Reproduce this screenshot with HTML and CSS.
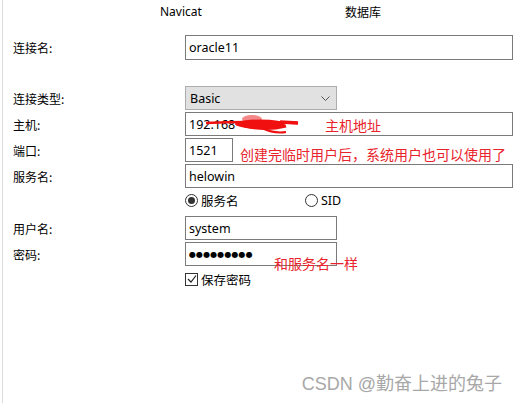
FILE: index.html
```html
<!DOCTYPE html>
<html lang="zh-CN">
<head>
  <meta charset="UTF-8" />
  <title>新建连接 - Oracle</title>
  <link rel="stylesheet" href="styles.css">
</head>
<body>
  <div class="window">
    <div class="tabs">
      <span class="tab tab-navicat">Navicat</span>
      <span class="tab tab-db">数据库</span>
    </div>

    <div class="form">
      <div class="row row-name">
        <span class="label">连接名:</span>
        <div class="field wide">oracle11</div>
      </div>

      <div class="row row-type">
        <span class="label">连接类型:</span>
        <div class="select">
          <span>Basic</span>
          <svg class="chevron" width="9" height="5" viewBox="0 0 9 5">
            <path d="M0.5 0.5 L4.5 4.5 L8.5 0.5" fill="none" stroke="#555" stroke-width="1"/>
          </svg>
        </div>
      </div>

      <div class="row">
        <span class="label">主机:</span>
        <div class="field wide host-field">
          192.168
          <!-- red marker scribble hiding the address -->
          <svg class="scribble" width="130" height="24" viewBox="0 0 130 24">
            <ellipse cx="66" cy="6" rx="10" ry="4" fill="#f06060" opacity="0.75"/>
            <path d="M20 10 Q60 8 112 10" fill="none" stroke="#f01010" stroke-width="2.4"/>
            <ellipse cx="74" cy="11" rx="25" ry="4.5" fill="#f01010"/>
            <path d="M58 13 Q80 18 100 13" fill="none" stroke="#f01010" stroke-width="3"/>
            <path d="M76 15 Q88 21 100 19" fill="none" stroke="#f01010" stroke-width="2"/>
            <path d="M94 9 L112 10" fill="none" stroke="#f01010" stroke-width="3.5"/>
          </svg>
          <span class="note note-host">主机地址</span>
        </div>
      </div>

      <div class="row">
        <span class="label">端口:</span>
        <div class="field port">1521</div>
        <span class="note note-port">创建完临时用户后，系统用户也可以使用了</span>
      </div>

      <div class="row">
        <span class="label">服务名:</span>
        <div class="field wide">helowin</div>
      </div>

      <div class="row row-radios">
        <span class="label"></span>
        <span class="option option-service"><span class="radio checked"></span>服务名</span>
        <span class="option"><span class="radio"></span>SID</span>
      </div>

      <div class="row row-user">
        <span class="label">用户名:</span>
        <div class="field short">system</div>
      </div>

      <div class="row">
        <span class="label">密码:</span>
        <div class="field short pass-field">
          <span class="dots">●●●●●●●●●</span>
          <span class="note note-pass">和服务名一样</span>
        </div>
      </div>

      <div class="row row-check">
        <span class="label"></span>
        <span class="option">
          <span class="checkbox">
            <svg width="10" height="10" viewBox="0 0 10 10">
              <path d="M1 5 L4 8 L9 1.5" fill="none" stroke="#222" stroke-width="1.2"/>
            </svg>
          </span>保存密码
        </span>
      </div>
    </div>

    <div class="watermark">CSDN @勤奋上进的兔子</div>
  </div>
</body>
</html>
```

FILE: styles.css
```css
html, body {
  margin: 0;
  padding: 0;
  background: #fff;
}

body {
  font-family: "Noto Sans", "Noto Sans CJK SC", sans-serif;
  font-size: 12px;
  color: #000;
}

.window {
  position: relative;
  height: 403px;
  margin-left: 2px;
  border-left: 1px solid #dcdcdc;
  overflow: hidden;
}

/* top tab titles */
.tabs {
  display: flex;
  align-items: center;
  height: 22px;
  padding-left: 157px;
}
.tab-db {
  margin-left: 143px;
  font-family: "Noto Sans CJK SC", sans-serif;
}

/* form rows */
.form {
  padding-left: 10px;
}
.row {
  display: flex;
  align-items: center;
  height: 24px;
  margin-top: 2px;
}
.row-name {
  margin-top: 13px;
  height: 25px;
}
.row-type {
  margin-top: 26px;
}
.row-radios {
  height: 20px;
}
.row-user {
  margin-top: 6px;
}
.row-check {
  margin-top: 4px;
  height: 18px;
}
.label {
  flex: 0 0 172px;
  font-family: "Noto Sans CJK SC", sans-serif;
  font-size: 12px;
}

.field {
  position: relative;
  box-sizing: border-box;
  height: 100%;
  display: flex;
  align-items: center;
  padding: 0 3px;
  border: 1px solid #7a7a7a;
  background: #fff;
  font-size: 12.5px;
}
.field.wide { width: 328px; }
.field.short { width: 152px; }
.field.port { width: 48px; }

.select {
  box-sizing: border-box;
  width: 152px;
  height: 100%;
  display: flex;
  align-items: center;
  justify-content: space-between;
  padding: 0 6px 0 4px;
  background: #e1e1e1;
  border: 1px solid #adadad;
  font-size: 12.5px;
}
.chevron {
  margin-top: 1px;
}

.scribble {
  position: absolute;
  left: 0;
  top: 0;
}

/* red hand-written notes */
.note {
  font-family: "Noto Sans CJK SC", sans-serif;
  font-size: 14px;
  line-height: 16px;
  color: #e8232b;
  white-space: nowrap;
}
.note-host {
  position: absolute;
  left: 139px;
  top: 4px;
}
.note-port {
  align-self: flex-end;
  margin-left: 7px;
}
.note-pass {
  position: absolute;
  left: 88px;
  top: 12px;
}

.dots {
  font-family: "DejaVu Sans", sans-serif;
  font-size: 8px;
  letter-spacing: 0.1px;
  margin-top: 1px;
}

/* radios and checkbox */
.option {
  display: flex;
  align-items: center;
  font-family: "Noto Sans", "Noto Sans CJK SC", sans-serif;
  font-size: 12.5px;
}
.option-service {
  width: 120px;
}
.radio {
  box-sizing: border-box;
  width: 13px;
  height: 13px;
  margin-right: 3px;
  border: 1px solid #333;
  border-radius: 50%;
  display: flex;
  align-items: center;
  justify-content: center;
}
.radio.checked::after {
  content: "";
  width: 7px;
  height: 7px;
  border-radius: 50%;
  background: #333;
}
.checkbox {
  box-sizing: border-box;
  width: 13px;
  height: 13px;
  margin-right: 3px;
  border: 1px solid #333;
  display: flex;
  align-items: center;
  justify-content: center;
}

.watermark {
  position: absolute;
  right: 19px;
  bottom: 8px;
  font-family: "Liberation Sans", "Noto Sans CJK SC", sans-serif;
  font-size: 18px;
  color: #a8a8a8;
  white-space: nowrap;
}
```
